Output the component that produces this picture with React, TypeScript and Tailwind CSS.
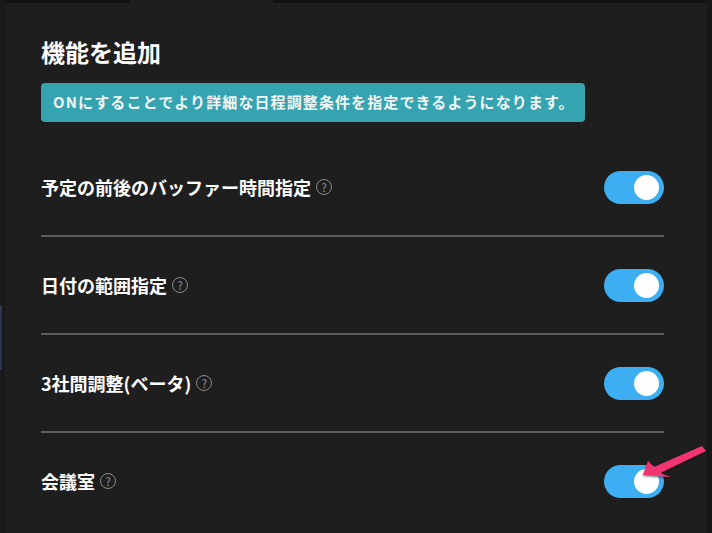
import React from "react";

const rows = [
  "予定の前後のバッファー時間指定",
  "日付の範囲指定",
  "3社間調整(ベータ)",
  "会議室",
];

function Help() {
  return (
    <span className="ml-[5px] inline-flex h-[16px] w-[16px] items-center justify-center rounded-full border border-[#8a8a8e] text-[11px] leading-none text-[#9a9a9e] font-normal">
      ?
    </span>
  );
}

function Toggle() {
  return (
    <div className="flex h-[33px] w-[60px] items-center justify-end rounded-full bg-[#3eaef3] pr-[5px]">
      <div className="h-[25px] w-[25px] rounded-full bg-white" />
    </div>
  );
}

export default function App() {
  return (
    <div
      className="relative flex h-[533px] w-[712px] overflow-hidden bg-[#1e1e1f]"
      style={{ fontFamily: '"Noto Sans CJK JP", "Noto Sans", sans-serif' }}
    >
      {/* left frame edge */}
      <div className="flex w-[5px] flex-col bg-[#19191a]">
        <div className="h-[305px]" />
        <div className="h-[65px] w-[2px] bg-[#2b3350]" />
      </div>
      <div className="flex flex-1 flex-col">
        <div className="flex h-[3px]">
          <div className="w-[125px] bg-[#121212]" />
          <div className="w-[143px]" />
          <div className="flex-1 bg-[#121212]" />
        </div>
        <div className="flex flex-1 flex-col pl-[36px] pr-[43px] pt-[33px]">
          <h1 className="text-[24px] font-bold leading-[32px] text-white">機能を追加</h1>
          <div className="mt-[15px] flex h-[39px] w-[544px] items-center rounded-[4px] bg-[#35a4b0] pl-[12px] text-[15px] font-bold tracking-[1.1px] text-[#f2f5f6]">
            ONにすることでより詳細な日程調整条件を指定できるようになります。
          </div>
          <div className="mt-[17px] flex flex-col">
            {rows.map((r, i) => (
              <div
                key={r}
                className={`flex h-[96px] items-center justify-between ${
                  i < rows.length - 1 ? "border-b-2 border-[#5c5c61]" : ""
                } box-content`}
              >
                <div className="flex items-center text-[18px] font-bold text-white">
                  {r}
                  <Help />
                </div>
                <Toggle />
              </div>
            ))}
          </div>
        </div>
      </div>
      <div className="w-[5px] bg-[#171718]" />

      {/* annotation arrow */}
      <svg
        className="absolute left-[630px] top-[440px]"
        width="82"
        height="50"
        viewBox="0 0 82 50"
      >
        <defs>
          <filter id="sh" x="-20%" y="-20%" width="140%" height="140%">
            <feDropShadow dx="0" dy="1" stdDeviation="1.2" floodColor="#000" floodOpacity="0.6" />
          </filter>
        </defs>
        <path
          d="M13 35 L18 21 L24 27 L72 6 L76 11 L30 33 L41 37 Z"
          fill="#f2346f"
          filter="url(#sh)"
        />
      </svg>
    </div>
  );
}
